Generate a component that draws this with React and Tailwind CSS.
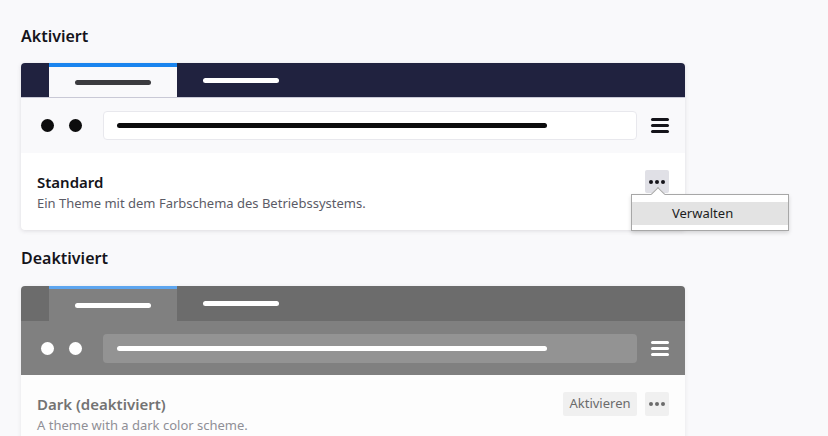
import React from 'react';

const Dots = ({ color }) => (
  <div className="flex items-center gap-[2px]">
    <span className={`w-[4px] h-[4px] rounded-full ${color}`} />
    <span className={`w-[4px] h-[4px] rounded-full ${color}`} />
    <span className={`w-[4px] h-[4px] rounded-full ${color}`} />
  </div>
);

const Hamburger = ({ color }) => (
  <div className="flex flex-col gap-[3px] w-[18px]">
    <span className={`h-[3px] rounded-full ${color}`} />
    <span className={`h-[3px] rounded-full ${color}`} />
    <span className={`h-[3px] rounded-full ${color}`} />
  </div>
);

const LightPreview = () => (
  <div>
    <div className="h-[35px] bg-[#20223f] flex pl-[28px] border-b border-[#c9c9d6]">
      <div className="w-[128px] bg-[#f9f9fb] border-t-[4px] border-[#1a84ee] flex items-center justify-center">
        <span className="w-[76px] h-[5px] rounded-full bg-[#3b3b3f]" />
      </div>
      <div className="w-[128px] flex items-center justify-center">
        <span className="w-[76px] h-[5px] rounded-full bg-white" />
      </div>
    </div>
    <div className="h-[55px] bg-[#f9f9fb] flex items-center pl-[20px]">
      <span className="w-[13px] h-[13px] rounded-full bg-[#0c0c0d]" />
      <span className="w-[13px] h-[13px] rounded-full bg-[#0c0c0d] ml-[15px]" />
      <div className="ml-[21px] w-[534px] h-[29px] bg-white border border-[#e8e8ed] rounded-[4px] flex items-center pl-[13px]">
        <span className="w-[430px] h-[5px] rounded-full bg-[#0c0c0d]" />
      </div>
      <div className="ml-[14px]">
        <Hamburger color="bg-[#15141a]" />
      </div>
    </div>
  </div>
);

const DarkPreview = () => (
  <div>
    <div className="h-[35px] bg-[#6c6c6c] flex pl-[28px]">
      <div className="w-[128px] bg-[#808080] border-t-[3px] border-[#5ea6ef] flex items-center justify-center">
        <span className="w-[76px] h-[5px] rounded-full bg-white" />
      </div>
      <div className="w-[128px] flex items-center justify-center">
        <span className="w-[76px] h-[5px] rounded-full bg-white" />
      </div>
    </div>
    <div className="h-[54px] bg-[#808080] flex items-center pl-[20px]">
      <span className="w-[13px] h-[13px] rounded-full bg-white" />
      <span className="w-[13px] h-[13px] rounded-full bg-white ml-[15px]" />
      <div className="ml-[21px] w-[534px] h-[29px] bg-[#939393] rounded-[4px] flex items-center pl-[14px]">
        <span className="w-[430px] h-[5px] rounded-full bg-white" />
      </div>
      <div className="ml-[14px]">
        <Hamburger color="bg-white" />
      </div>
    </div>
  </div>
);

export default function App() {
  return (
    <div
      className="w-[828px] h-[436px] overflow-hidden bg-[#f9f9fb] pl-[21px] pt-[25px] text-[#15141a]"
      style={{ fontFamily: '"Noto Sans", "Open Sans", sans-serif' }}
    >
      <h2 className="text-[16px] leading-[22px] font-semibold">Aktiviert</h2>

      <div className="relative mt-[16px] w-[664px] rounded-[4px] bg-white shadow-[0_1px_4px_rgba(58,57,68,0.15)]">
        <div className="rounded-t-[4px] overflow-hidden">
          <LightPreview />
        </div>
        <div className="h-[77px] flex justify-between pl-[16px] pr-[16px]">
          <div className="pt-[19px]">
            <div className="text-[15px] leading-[20px] font-semibold">Standard</div>
            <div className="mt-[2px] text-[13px] leading-[18px] text-[#5b5b66]">
              Ein Theme mit dem Farbschema des Betriebssystems.
            </div>
          </div>
          <button className="mt-[17px] w-[24px] h-[23px] rounded-[2px] bg-[#e0e0e6] flex items-center justify-center">
            <Dots color="bg-[#15141a]" />
          </button>
        </div>

        <div className="absolute left-[610px] top-[131px] w-[158px] h-[37px] bg-white border border-[#a7a7a7] shadow-[0_2px_4px_rgba(0,0,0,0.15)] pt-[7px]">
          <span className="absolute -top-[6px] left-[21px] w-[10px] h-[10px] rotate-45 bg-white border-l border-t border-[#a7a7a7]" />
          <div className="relative h-[23px] bg-[#e3e3e3] flex items-center pl-[40px] text-[13px] text-[#1c1c1c]">
            Verwalten
          </div>
        </div>
      </div>

      <h2 className="mt-[17px] text-[16px] leading-[22px] font-semibold">Deaktiviert</h2>

      <div className="mt-[17px] w-[664px] rounded-[4px] bg-[#fdfdfd] shadow-[0_1px_4px_rgba(58,57,68,0.1)]">
        <div className="rounded-t-[4px] overflow-hidden">
          <DarkPreview />
        </div>
        <div className="h-[77px] flex justify-between pl-[16px] pr-[16px]">
          <div className="pt-[19px]">
            <div className="text-[15px] leading-[20px] font-semibold text-[#737373]">Dark (deaktiviert)</div>
            <div className="mt-[2px] text-[13px] leading-[18px] text-[#8f8f96]">A theme with a dark color scheme.</div>
          </div>
          <div className="mt-[17px] flex gap-[8px]">
            <button className="h-[24px] w-[74px] rounded-[2px] bg-[#f0f0f0] text-[13px] text-[#6b6b6b] flex items-center justify-center">
              Aktivieren
            </button>
            <button className="w-[24px] h-[24px] rounded-[2px] bg-[#f0f0f0] flex items-center justify-center">
              <Dots color="bg-[#6b6b6b]" />
            </button>
          </div>
        </div>
      </div>
    </div>
  );
}
